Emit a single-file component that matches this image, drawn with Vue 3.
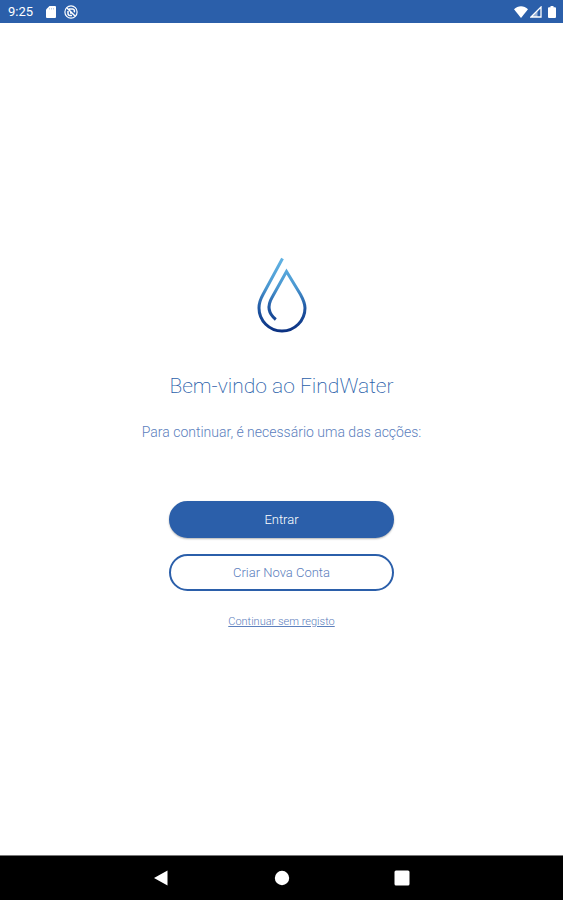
<template>
  <div class="screen">
    <header class="status-bar">
      <div class="status-group">
        <span class="clock">9:25</span>
        <svg class="icon-card" viewBox="0 0 10 12" width="10" height="12">
          <path d="M3.5 0H9a1 1 0 0 1 1 1v10a1 1 0 0 1-1 1H1a1 1 0 0 1-1-1V3.5z" fill="#fff" />
          <path d="M3.500 2v1.500M5.500 2v1.500M7.500 2v1.500" stroke="#8fb0dc" stroke-width="0.6" />
        </svg>
        <svg viewBox="0 0 14 14" width="14" height="14" fill="none" stroke="#fff">
          <circle cx="7" cy="7" r="6.100" stroke-width="1.200" />
          <path d="M3 3l8 8M5 4h3.500a2 2 0 0 1 1.500 3.300M4 6v2.500a2 2 0 0 0 2 2h2M6 8h1.500" stroke-width="1.500" />
        </svg>
      </div>
      <div class="status-group status-right">
        <svg viewBox="0 0 14 12" width="14" height="12">
          <path d="M7 12L0 3.200C4 -0.700 10 -0.700 14 3.200z" fill="#fff" />
        </svg>
        <svg viewBox="0 0 12 12" width="12" height="12">
          <path d="M11 1v10H1z" fill="none" stroke="#fff" stroke-width="1.300" />
          <path d="M7.500 5v6H1z" fill="#fff" fill-opacity="0.5" />
        </svg>
        <svg class="icon-battery" viewBox="0 0 8 12" width="8" height="12">
          <path d="M2.500 0h3v1.200H7a1 1 0 0 1 1 1V11a1 1 0 0 1-1 1H1a1 1 0 0 1-1-1V2.200a1 1 0 0 1 1-1h1.500z" fill="#fff" />
        </svg>
      </div>
    </header>

    <main class="welcome">
      <svg class="logo" viewBox="0 0 50 76" width="50" height="76" fill="none">
        <defs>
          <linearGradient id="drop" gradientUnits="userSpaceOnUse" x1="0" y1="0" x2="0" y2="76">
            <stop offset="0" stop-color="#62b4e4" />
            <stop offset="0.4" stop-color="#4a97d0" />
            <stop offset="0.68" stop-color="#1f56a2" />
            <stop offset="1" stop-color="#0a2f80" />
          </linearGradient>
        </defs>
        <path
          d="M25.500 1.500L6 37.500C3.200 42.500 2 46 2 51A23 23 0 0 0 48 51C48 46 46.200 42.500 43.500 37.500L29.500 14.500L15 40.500C9.500 50 12 57 18.800 62.500"
          stroke="url(#drop)"
          stroke-width="3"
        />
      </svg>
      <h1 class="title">Bem-vindo ao FindWater</h1>
      <p class="subtitle">Para continuar, é necessário uma das acções:</p>
      <div class="actions">
        <button type="button" class="btn btn-primary">Entrar</button>
        <button type="button" class="btn btn-outline">Criar Nova Conta</button>
      </div>
      <a href="#" class="skip">Continuar sem registo</a>
    </main>

    <nav class="nav-bar">
      <button type="button" class="nav-btn" aria-label="Voltar">
        <svg viewBox="0 0 16 16" width="16" height="16"><path d="M13.500 0.500v15L0 8z" fill="#fff" /></svg>
      </button>
      <button type="button" class="nav-btn" aria-label="Início">
        <svg viewBox="0 0 16 16" width="16" height="16"><circle cx="8" cy="8" r="7.200" fill="#fff" /></svg>
      </button>
      <button type="button" class="nav-btn" aria-label="Recentes">
        <svg viewBox="0 0 16 16" width="16" height="16"><rect x="0.500" y="0.500" width="15" height="15" rx="1.500" fill="#fff" /></svg>
      </button>
    </nav>
  </div>
</template>

<script setup>
</script>

<style>
body {
  margin: 0;
}
</style>

<style scoped>
.screen {
  display: flex;
  flex-direction: column;
  min-height: 100vh;
  background: #fff;
  color: #2b5faa;
  font-family: Roboto, "Liberation Sans", sans-serif;
  font-weight: 300;
}

svg {
  display: block;
}

.status-bar {
  display: flex;
  justify-content: space-between;
  align-items: center;
  box-sizing: border-box;
  height: 23px;
  padding: 0 7px 0 8px;
  background: #2b5faa;
  color: #fff;
}

.status-group {
  display: flex;
  align-items: center;
}

.status-right {
  gap: 2px;
}

.clock {
  font-size: 13px;
  line-height: 24px;
  font-weight: 400;
}

.icon-card {
  margin: 0 8px 0 13px;
}

.icon-battery {
  margin-left: 4px;
}

.welcome {
  flex: 1;
  display: flex;
  flex-direction: column;
  align-items: center;
  justify-content: center;
  padding-top: 8px;
}

.title {
  margin: 41px 0 0;
  font-size: 21px;
  line-height: 24px;
  font-weight: 200;
}

.subtitle {
  margin: 24px 0 0;
  color: #5c80bd;
  font-size: 14px;
  line-height: 20px;
}

.actions {
  display: flex;
  flex-direction: column;
  gap: 16px;
  width: 40%;
  margin-top: 59px;
}

.btn {
  box-sizing: border-box;
  height: 37px;
  padding: 0;
  border: 2px solid #2b5faa;
  border-radius: 19px;
  font: inherit;
  font-size: 13px;
}

.btn-primary {
  background: #2b5faa;
  color: #fff;
  box-shadow: 0 1px 2px rgba(0, 0, 0, 0.3);
}

.btn-outline {
  background: #fff;
  color: #5c80bd;
}

.skip {
  margin-top: 23px;
  color: #5c80bd;
  font-size: 11px;
  line-height: 16px;
}

.nav-bar {
  display: flex;
  justify-content: center;
  align-items: center;
  gap: 104px;
  box-sizing: border-box;
  height: 45px;
  border-top: 1px solid #777;
  background: #000;
}

.nav-btn {
  padding: 0;
  border: 0;
  background: none;
}
</style>
